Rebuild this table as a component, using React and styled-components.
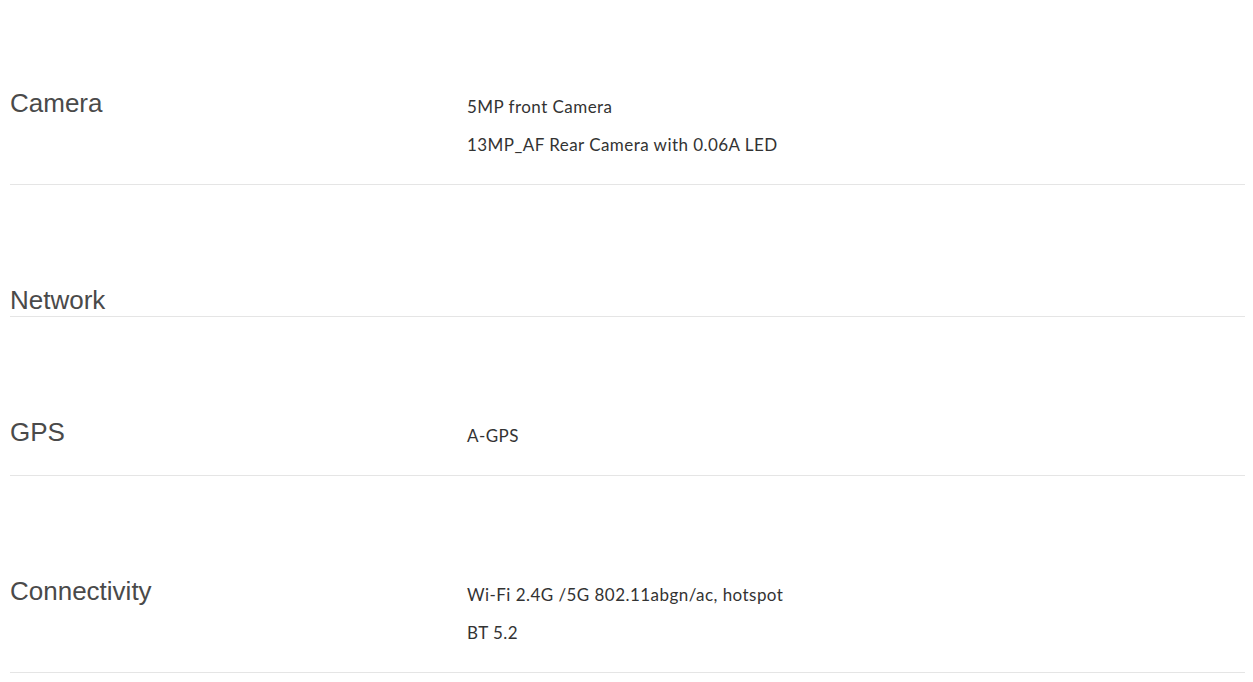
import styled, { createGlobalStyle } from "styled-components"

const GlobalStyle = createGlobalStyle`
body {
  margin: 0;
  background: #fff;
}
`

const specs = [
    { title: "Camera", values: ["5MP front Camera", "13MP_AF Rear Camera with 0.06A LED"] },
    { title: "Network", values: [] },
    { title: "GPS", values: ["A-GPS"] },
    { title: "Connectivity", values: ["Wi-Fi 2.4G /5G 802.11abgn/ac, hotspot", "BT 5.2"] },
]

const App = () => {
    return (<Container>
        <GlobalStyle />
        {specs.map((spec) => (
            <Row key={spec.title}>
                <Title>{spec.title}</Title>
                <Values>
                    {spec.values.map((v) => <Value key={v}>{v}</Value>)}
                </Values>
            </Row>
        ))}
    </Container>)
}

const Container = styled.div`
padding: 0 8px 0 10px;
`
const Row = styled.div`
display: flex;
align-items: flex-start;
padding-top: 99px;
border-bottom: 1px solid #e5e5e5;

&:first-child {
    padding-top: 87px;
}
`
const Title = styled.h3`
margin: 0;
width: 457px;
flex-shrink: 0;
font-family: "Liberation Sans", Arial, sans-serif;
font-weight: normal;
font-size: 26px;
line-height: 32px;
color: #4a4a4a;
`
const Values = styled.div`
flex: 1;
padding: 8px 0 27px;

&:empty {
    padding: 0;
}
`
const Value = styled.p`
margin: 0 0 14px;
font-family: Lato, sans-serif;
font-size: 17px;
letter-spacing: 0.45px;
line-height: 24px;
color: #333;

&:last-child {
    margin-bottom: 0;
}
`

export default App;
